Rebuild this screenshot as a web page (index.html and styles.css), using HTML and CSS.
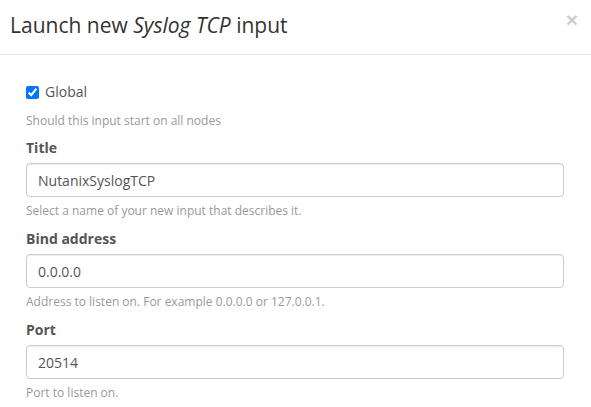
FILE: index.html
```html
<!DOCTYPE html>
<html>
<head>
<meta charset="utf-8">
<link rel="stylesheet" href="styles.css">
</head>
<body>
<div class="modal">
  <div class="modal-header">
    <h2 class="modal-title">Launch new <em>Syslog TCP</em> input</h2>
    <button class="close" type="button">×</button>
  </div>
  <div class="modal-body">
    <label class="checkbox"><input type="checkbox" checked> <span>Global</span></label>
    <p class="help first">Should this input start on all nodes</p>

    <div class="field">
      <label class="control-label">Title</label>
      <input class="form-control" type="text" value="NutanixSyslogTCP">
      <p class="help">Select a name of your new input that describes it.</p>
    </div>

    <div class="field">
      <label class="control-label">Bind address</label>
      <input class="form-control" type="text" value="0.0.0.0">
      <p class="help">Address to listen on. For example 0.0.0.0 or 127.0.0.1.</p>
    </div>

    <div class="field">
      <label class="control-label">Port</label>
      <input class="form-control" type="text" value="20514">
      <p class="help">Port to listen on.</p>
    </div>
  </div>
</div>
</body>
</html>
```
FILE: styles.css
```css
html, body {
  margin: 0;
  padding: 0;
  background: #fff;
}
body {
  font-family: "Open Sans", "DejaVu Sans", sans-serif;
  font-size: 14px;
  line-height: 20px;
  color: #333;
  overflow: hidden;
}
.modal {
  width: 591px;
}
.modal-header {
  display: flex;
  justify-content: space-between;
  align-items: flex-start;
  height: 55px;
  box-sizing: border-box;
  padding: 0 13px 0 10px;
  border-bottom: 1px solid #e5e5e5;
}
.modal-title {
  margin: 10px 0 0 0;
  font-size: 21px;
  line-height: 30px;
  font-weight: 400;
  color: #333;
}
.modal-title em {
  font-style: italic;
}
.close {
  margin: 9px 0 0 0;
  padding: 0;
  border: 0;
  background: none;
  font-family: "Liberation Sans", Arial, sans-serif;
  font-size: 21px;
  font-weight: 700;
  line-height: 21px;
  color: #000;
  opacity: 0.2;
}
.modal-body {
  padding: 27px 27px 0 26px;
}
.checkbox {
  display: flex;
  align-items: center;
  height: 20px;
  color: #555;
}
.checkbox input {
  width: 13px;
  height: 13px;
  margin: 1px 6px 0 0;
}
.help {
  margin: 5px 0 10px;
  font-size: 12px;
  line-height: 17px;
  color: #999;
}
.help.first {
  margin-top: 10px;
  margin-bottom: 9px;
}
.field {
  display: flex;
  flex-direction: column;
}
.control-label {
  font-weight: 700;
  color: #555;
  margin-bottom: 5px;
}
.form-control {
  box-sizing: border-box;
  width: 100%;
  height: 34px;
  padding: 6px 11px;
  border: 1px solid #ccc;
  border-radius: 4px;
  font-family: "Open Sans", "DejaVu Sans", sans-serif;
  font-size: 14px;
  color: #555;
  background: #fff;
  box-shadow: inset 0 1px 1px rgba(0,0,0,0.075);
}
```
